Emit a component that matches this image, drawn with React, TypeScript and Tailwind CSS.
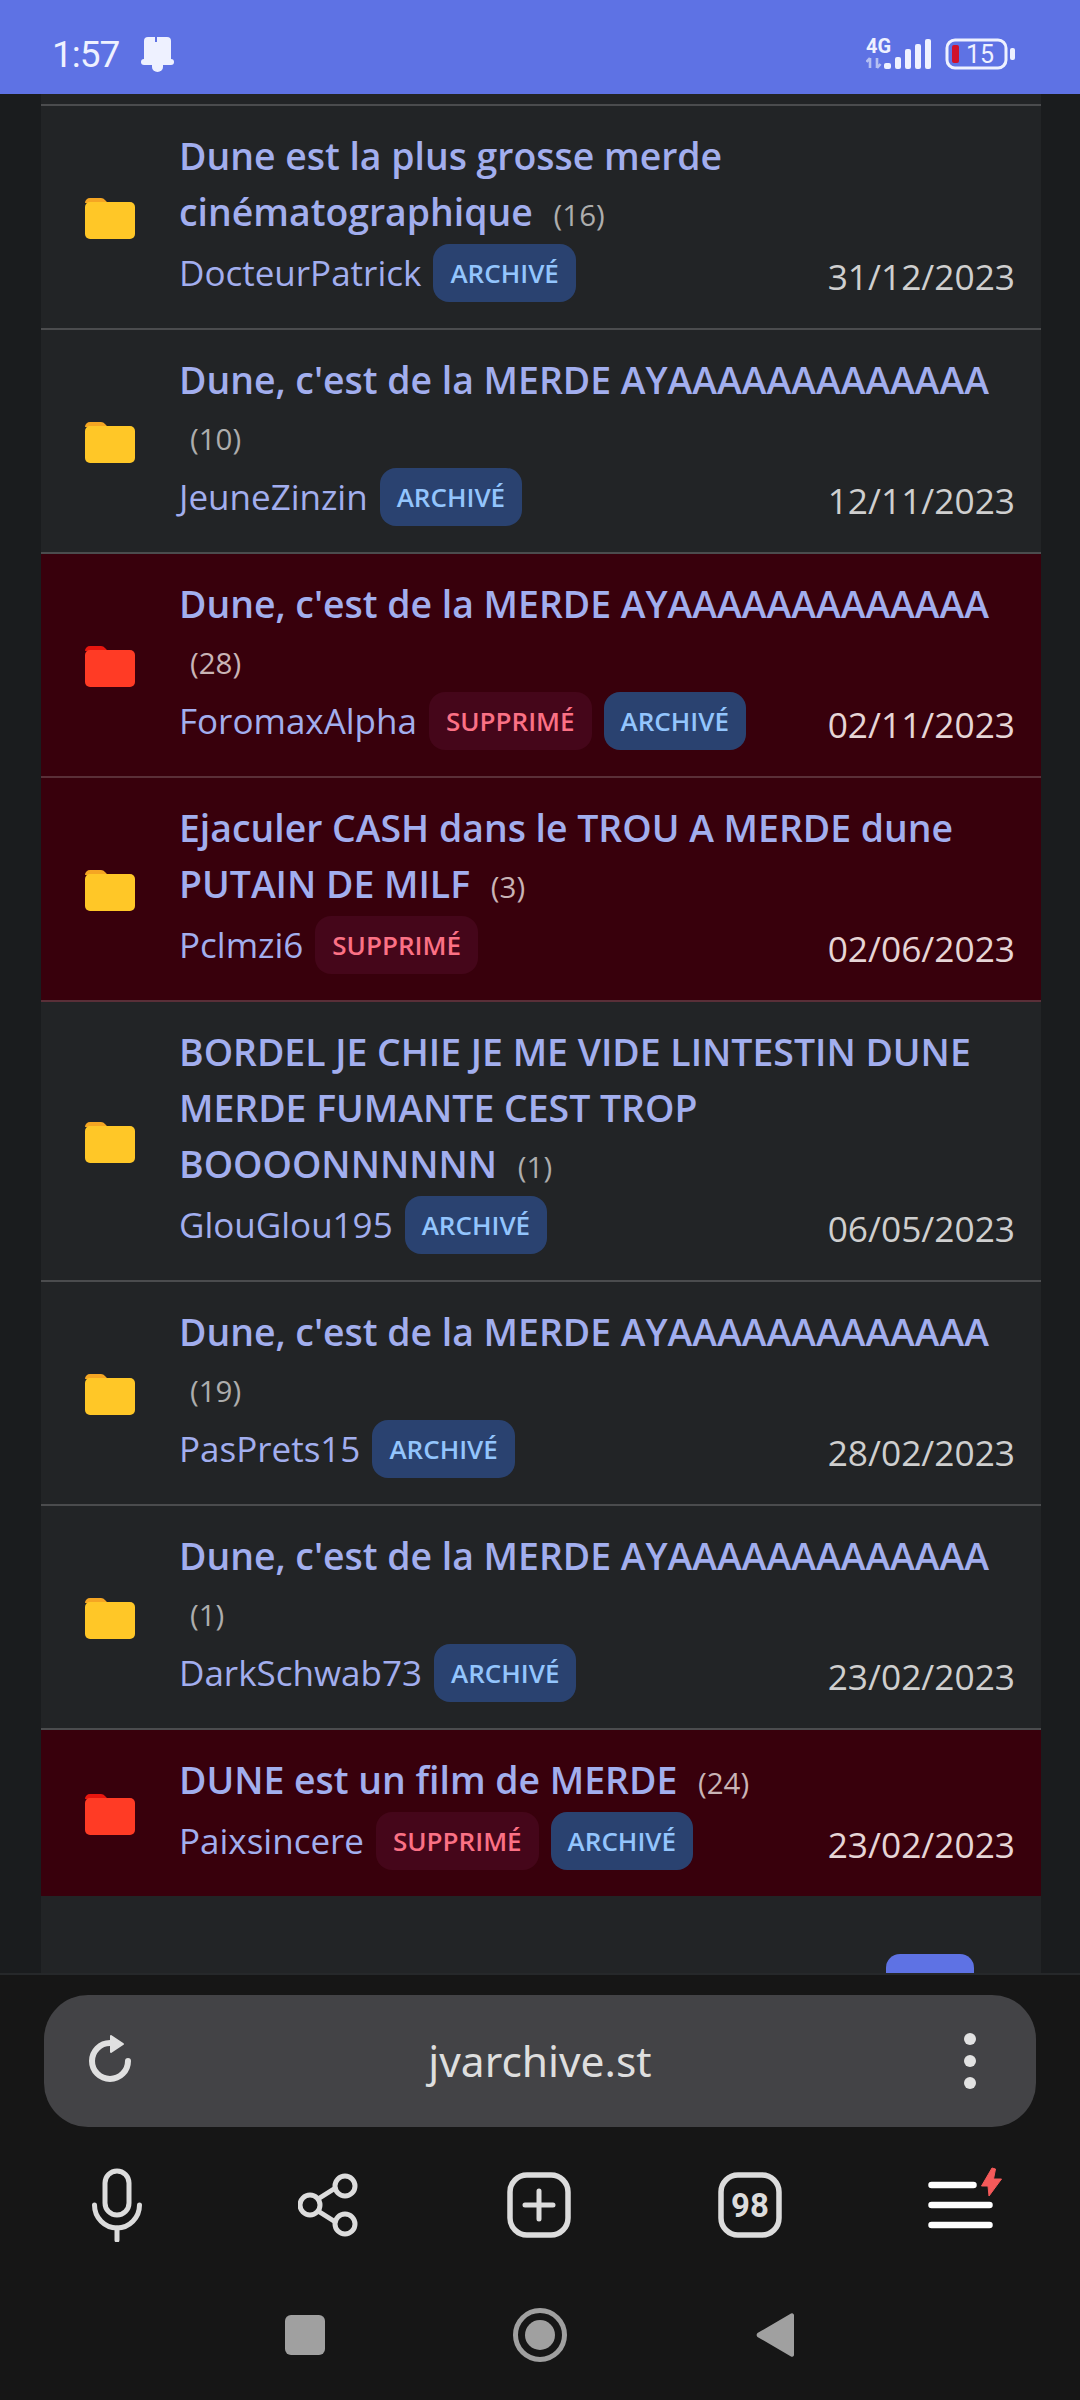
import React from 'react';

interface Topic {
  title: string;
  count: number;
  author: string;
  date: string;
  deleted?: boolean;
  archived?: boolean;
  redFolder?: boolean;
}

const DUNE_AYA = "Dune, c'est de la MERDE AYAAAAAAAAAAAAA";

const topics: Topic[] = [
  { title: 'Dune est la plus grosse merde cinématographique', count: 16, author: 'DocteurPatrick', date: '31/12/2023', archived: true },
  { title: DUNE_AYA, count: 10, author: 'JeuneZinzin', date: '12/11/2023', archived: true },
  { title: DUNE_AYA, count: 28, author: 'ForomaxAlpha', date: '02/11/2023', deleted: true, archived: true, redFolder: true },
  { title: 'Ejaculer CASH dans le TROU A MERDE dune PUTAIN DE MILF', count: 3, author: 'Pclmzi6', date: '02/06/2023', deleted: true },
  { title: 'BORDEL JE CHIE JE ME VIDE LINTESTIN DUNE MERDE FUMANTE CEST TROP BOOOONNNNNN', count: 1, author: 'GlouGlou195', date: '06/05/2023', archived: true },
  { title: DUNE_AYA, count: 19, author: 'PasPrets15', date: '28/02/2023', archived: true },
  { title: DUNE_AYA, count: 1, author: 'DarkSchwab73', date: '23/02/2023', archived: true },
  { title: 'DUNE est un film de MERDE', count: 24, author: 'Paixsincere', date: '23/02/2023', deleted: true, archived: true, redFolder: true },
];

const Folder: React.FC<{ red?: boolean }> = ({ red }) => (
  <svg width="50" height="41" viewBox="0 0 50 41" className="mt-[6px] shrink-0">
    <path d="M0 5a5 5 0 0 1 5-5h11a5 5 0 0 1 4 2l3 3h-23z" fill={red ? '#e8160f' : '#f5a623'} />
    <path d="M0 9a5 5 0 0 1 5-5h40a5 5 0 0 1 5 5v27a5 5 0 0 1-5 5H5a5 5 0 0 1-5-5z" fill={red ? '#ff3b25' : '#ffc727'} />
  </svg>
);

const Row: React.FC<{ topic: Topic; last: boolean }> = ({ topic, last }) => (
  <div
    className={`flex items-center pl-[44px] pr-[26px] pt-[22px] ${last ? 'pb-[26px]' : 'border-b-2 pb-[26px]'} ${
      topic.deleted ? 'bg-[#38000c] border-[#5a2f38]' : 'bg-[#222426] border-[#4b4c4e]'
    }`}
  >
    <Folder red={topic.redFolder} />
    <div className="ml-[44px] min-w-0 flex-1">
      <div className="text-[37.4px] leading-[56px] font-semibold text-[#a2aeee]">
        {topic.title}{' '}
        <span className={`ml-[11px] inline-block text-[29.5px] leading-none font-normal ${topic.deleted ? 'text-[#c9b4b6]' : 'text-[#adadad]'}`}>
          ({topic.count})
        </span>
      </div>
      <div className="mt-[4px] flex items-end justify-between">
        <div className="flex items-center">
          <span className="text-[35px] leading-[58px] text-[#a2aeee]">{topic.author}</span>
          {topic.deleted && (
            <span className="ml-[12px] flex h-[58px] items-center rounded-[16px] bg-[#45061a] px-[17px] text-[26px] font-semibold text-[#fb7185]">
              SUPPRIMÉ
            </span>
          )}
          {topic.archived && (
            <span className="ml-[12px] flex h-[58px] items-center rounded-[16px] bg-[#2a4270] px-[17px] text-[26px] font-semibold text-[#93c5fd]">
              ARCHIVÉ
            </span>
          )}
        </div>
        <span className={`mb-[1px] text-[35.3px] leading-[50px] ${topic.deleted ? 'text-[#e6d5d6]' : 'text-[#cfcfcf]'}`}>{topic.date}</span>
      </div>
    </div>
  </div>
);

const StatusBar = () => (
  <div className="flex h-[94px] shrink-0 items-center justify-between bg-[#5e72e4] pl-[52px] pr-[65px] pt-[14px] text-[#eef1ff]">
    <div className="flex items-center gap-[22px]">
      <span className="font-['Roboto',sans-serif] text-[37px] leading-none font-normal tracking-[-1px]">1:57</span>
      <svg width="33" height="35" viewBox="0 0 33 35">
        <path d="M3 4a4 4 0 0 1 4-4h19a4 4 0 0 1 4 4v20H3z" fill="#eef1ff" />
        <path d="M15 0v5" stroke="#5e72e4" strokeWidth="2" />
        <rect x="0" y="22" width="33" height="6" rx="3" fill="#eef1ff" />
        <path d="M11 27h11v3a5.500 5 0 0 1-11 0z" fill="#eef1ff" />
      </svg>
    </div>
    <div className="flex items-center gap-[14px]">
      <svg width="65" height="32" viewBox="0 0 65 32">
        <text x="0" y="15" fontFamily="Roboto, sans-serif" fontWeight="700" fontSize="20" fill="#eef1ff">4G</text>
        <path d="M4 20v10M4 20l-3.500 4M11 30v-10M11 30l3.500-4" stroke="#b4bff2" strokeWidth="2.600" fill="none" />
        <rect x="18" y="25" width="7" height="6" rx="2" fill="#eef1ff" />
        <rect x="29" y="19" width="6" height="12" rx="2" fill="#eef1ff" />
        <rect x="39" y="11" width="6" height="20" rx="2" fill="#eef1ff" />
        <rect x="49" y="6" width="6" height="25" rx="2" fill="#eef1ff" />
        <rect x="59" y="1" width="6" height="30" rx="2" fill="#eef1ff" />
      </svg>
      <svg width="70" height="32" viewBox="0 0 70 32">
        <rect x="2" y="2" width="59" height="28" rx="8" fill="none" stroke="#eef1ff" strokeWidth="3" />
        <rect x="7" y="7" width="7" height="18" rx="2" fill="#d0112b" />
        <text x="21" y="25" fontFamily="Roboto, sans-serif" fontSize="25" fill="#eef1ff">15</text>
        <rect x="65" y="10" width="5" height="12" rx="2" fill="#eef1ff" />
      </svg>
    </div>
  </div>
);

const BottomBar = () => (
  <div className="h-[427px] shrink-0 border-t-2 border-t-[#26282a] bg-[#161616]">
    <div className="mx-[44px] mt-[20px] flex h-[132px] items-center justify-between rounded-[44px] bg-[#434346] px-[36px]">
      <div className="flex w-[60px] justify-center">
        <svg width="48" height="56" viewBox="0 0 48 56" fill="none" stroke="#e0e0e0" strokeWidth="6" strokeLinecap="round">
          <path d="M24 10A18 18 0 1 0 42 28" />
          <path d="M25 3l12 8-12 8z" fill="#e0e0e0" strokeWidth="2" strokeLinejoin="round" />
        </svg>
      </div>
      <span className="text-[42.5px] leading-none text-[#dedede] font-['Noto_Sans',sans-serif]">jvarchive.st</span>
      <div className="flex w-[60px] flex-col items-center gap-[10px]">
        <span className="size-[12px] rounded-full bg-[#e2e2e2]" />
        <span className="size-[12px] rounded-full bg-[#e2e2e2]" />
        <span className="size-[12px] rounded-full bg-[#e2e2e2]" />
      </div>
    </div>
    <div className="mt-[40px] grid h-[74px] grid-cols-5 pl-[11px] pr-[14px]">
      <div className="flex items-center justify-center">
        <svg width="50" height="74" viewBox="0 0 50 74" fill="none" stroke="#dcdcdc" strokeWidth="5" strokeLinecap="round">
          <rect x="13" y="3" width="24" height="44" rx="12" />
          <path d="M2.500 37a22.500 23 0 0 0 45 0" />
          <path d="M25 60v12" />
        </svg>
      </div>
      <div className="flex items-center justify-center">
        <svg width="60" height="64" viewBox="0 0 60 64" fill="none" stroke="#dcdcdc" strokeWidth="5">
          <circle cx="47" cy="13" r="10" />
          <circle cx="12" cy="32" r="10" />
          <circle cx="47" cy="51" r="10" />
          <path d="M20 26l19-12M20 38l19 12" />
        </svg>
      </div>
      <div className="flex items-center justify-center">
        <svg width="64" height="66" viewBox="0 0 64 66" fill="none" stroke="#dcdcdc">
          <rect x="3" y="3" width="58" height="60" rx="17" strokeWidth="5.500" />
          <path d="M18 33h28M32 19v28" strokeWidth="5" strokeLinecap="round" />
        </svg>
      </div>
      <div className="flex items-center justify-center">
        <svg width="64" height="66" viewBox="0 0 64 66" fill="none" stroke="#dcdcdc">
          <rect x="3" y="3" width="58" height="60" rx="17" strokeWidth="5.500" />
          <text x="32" y="45" textAnchor="middle" fontFamily="Roboto, sans-serif" fontWeight="700" fontSize="33" fill="#dcdcdc" stroke="none">98</text>
        </svg>
      </div>
      <div className="flex items-center justify-center">
        <svg width="78" height="76" viewBox="0 0 78 76" className="overflow-visible">
          <path d="M9.500 18H51.500M9.500 38H67.500M9.500 58H67.500" stroke="#fff" strokeWidth="6.500" strokeLinecap="round" />
          <path d="M70 1L59.500 19H66L67 29L79.500 12H71.500L73.500 2Z" fill="#f55a5a" stroke="#f55a5a" strokeLinejoin="round" />
        </svg>
      </div>
    </div>
    <div className="mt-[66px] grid h-[56px] grid-cols-3 px-[188px]">
      <div className="flex items-center justify-center">
        <span className="block h-[40px] w-[40px] rounded-[6px] bg-[#a0a0a0]" />
      </div>
      <div className="flex items-center justify-center">
        <svg width="54" height="54" viewBox="0 0 54 54">
          <circle cx="27" cy="27" r="24.500" fill="none" stroke="#a0a0a0" strokeWidth="5" />
          <circle cx="27" cy="27" r="15" fill="#a0a0a0" />
        </svg>
      </div>
      <div className="flex items-center justify-center">
        <svg width="38" height="46" viewBox="0 0 38 46">
          <path d="M35 1.500a2 2 0 0 1 3 1.500v40a2 2 0 0 1-3 1.500L1.500 25a3 3 0 0 1 0-4z" fill="#a0a0a0" />
        </svg>
      </div>
    </div>
  </div>
);

export default function App() {
  return (
    <div className="flex h-[2400px] w-[1080px] flex-col overflow-hidden bg-[#1a1c1e] font-['Open_Sans',sans-serif]">
      <StatusBar />
      <div className="min-h-0 flex-1 overflow-hidden pl-[41px] pr-[39px]">
        <div className="h-full bg-[#222426]">
          <div className="box-content h-[10px] border-b-2 border-[#4b4c4e]" />
          {topics.map((topic, i) => (
            <Row key={i} topic={topic} last={i === topics.length - 1} />
          ))}
          <div className="flex justify-end pt-[58px] pr-[67px]">
            <div className="h-[40px] w-[88px] shrink-0 rounded-t-[14px] bg-[#5e72e4]" />
          </div>
        </div>
      </div>
      <BottomBar />
    </div>
  );
}
